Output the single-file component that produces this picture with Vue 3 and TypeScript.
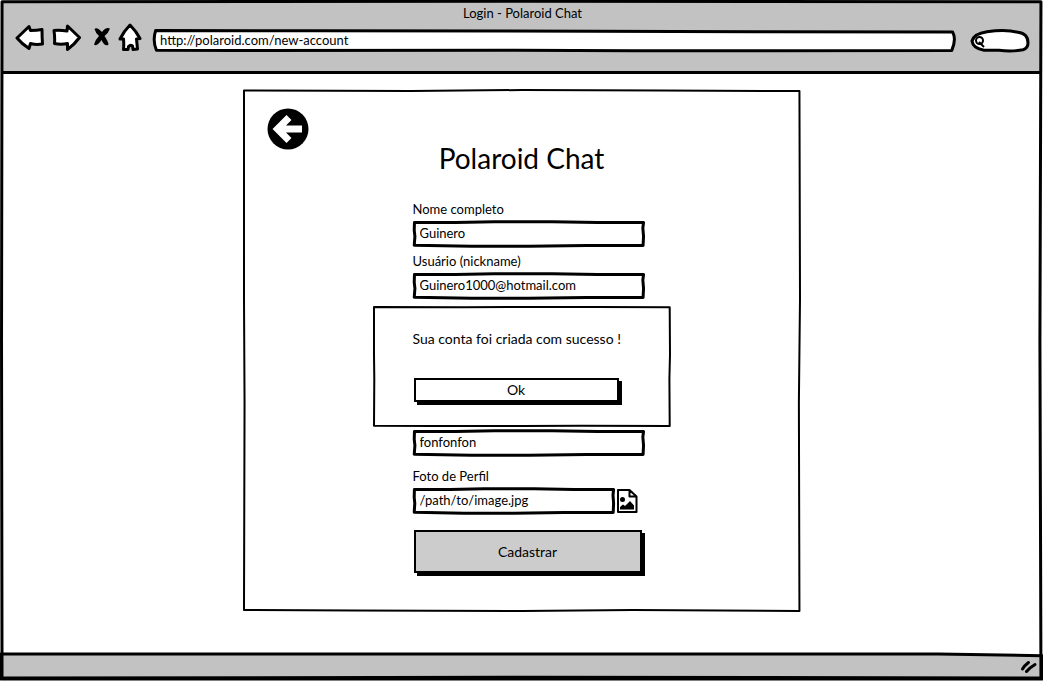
<script setup lang="ts">
import { reactive, ref } from 'vue'

const title = 'Polaroid Chat'
const address = ref('http://polaroid.com/new-account')
const query = ref('')

const account = reactive({
  name: 'Guinero',
  nickname: 'Guinero1000@hotmail.com',
  extra: 'fonfonfon',
  photo: '/path/to/image.jpg',
})

// Hand-drawn outlines on a 100 x 100 grid, stretched over their box.
const boxInk = 'M0.2 2 L18 2 L35 -1 L60 -1 L80 2 L99.8 2 L99.5 25 L99.8 60 L99.6 98 L75 98 L50 101 L25 101 L0.1 97 L0.4 60 L0.1 35 Z'
const frameInk = 'M0 0.1 L30 0.2 L50 0 L75 0.1 L99.9 0.2 L100 40 L99.8 60 L99.9 100 L70 99.8 L50 100 L20 99.9 L0 99.8 L0.1 60 L0 40 Z'
</script>

<template>
  <div class="browser">
    <header class="chrome">
      <div class="window-title">Login - {{ title }}</div>
      <nav class="toolbar">
        <button class="tool back" type="button" aria-label="Voltar">
          <svg width="30" height="28" viewBox="0 0 30 28">
            <path class="white-ink" d="M2 14 L14 2.500 L15.500 6.500 Q22 6.500 27 5.500 Q27 13 27.500 20 Q21 21 15.500 19.500 L14 24.500 Q7 20 2 14 Z" />
          </svg>
        </button>
        <button class="tool forward" type="button" aria-label="Avançar">
          <svg width="30" height="28" viewBox="0 0 30 28">
            <path class="white-ink" d="M27.500 13.500 L15.500 2 L15 7 Q8 6 2 6.500 Q3 13 2.500 19.500 Q9 21 15.500 19.500 L15.500 25.500 Q22 21 27.500 13.500 Z" />
          </svg>
        </button>
        <button class="tool stop" type="button" aria-label="Parar">
          <svg width="18" height="22" viewBox="0 0 18 22">
            <path d="M1.500 2 Q4 -0.500 9 5 Q13 -0.500 17 1.500 Q15.500 6 11.500 9 Q15 14 15.500 17.500 Q12 20.500 8.500 13 Q4 20 1 17.500 Q2 13 6 9 Q2.500 6 1.500 2 Z" />
          </svg>
        </button>
        <button class="tool home" type="button" aria-label="Início">
          <svg width="24" height="30" viewBox="0 0 24 30">
            <path class="white-ink" d="M12 2 Q18 8 22 15.500 L18.500 16 Q19 21 19.500 26 L15 26.500 L14.500 23 Q12.500 21.500 10.500 23.500 L10 26.500 L5.500 26.500 Q6 21 5.500 16 L2 16 Q6 8 12 2 Z" />
          </svg>
        </button>
        <label class="address">
          <svg class="ink" viewBox="0 0 100 100" preserveAspectRatio="none" aria-hidden="true">
            <path d="M0.200 -2 L20 -1 L55 1 L75 4 L99.700 5 Q100.200 40 99.600 97 L60 99 L45 96 L10 97 L0.300 96 Q-0.200 50 0.200 -2 Z" />
          </svg>
          <input v-model="address" type="text" aria-label="Endereço" />
        </label>
        <label class="search">
          <svg class="ink" viewBox="0 0 58 24" preserveAspectRatio="none" aria-hidden="true">
            <path d="M1 12 Q3 4 16 2 Q34 -1 47 2.500 Q57 4 57 14 Q57 20 52 21.500 Q40 24 28 22 L13 22 Q2 20 1 12 Z" />
          </svg>
          <svg class="lens" width="12" height="14" viewBox="0 0 12 14" aria-hidden="true">
            <circle cx="5.500" cy="5.500" r="3.500" /><path d="M5 7 L10 12" />
          </svg>
          <input v-model="query" type="text" aria-label="Buscar" />
        </label>
      </nav>
    </header>

    <main class="page">
      <section class="card">
        <svg class="ink" viewBox="0 0 100 100" preserveAspectRatio="none" aria-hidden="true"><path :d="frameInk" /></svg>
        <button class="return" type="button" aria-label="Voltar para o login">
          <svg width="42" height="42" viewBox="0 0 42 42">
            <circle cx="21" cy="21" r="20.500" />
            <path class="arrow" d="M22 9.500 L10.500 21 L22 32.500 M12 21 H35" />
          </svg>
        </button>
        <h1>{{ title }}</h1>

        <form class="form" @submit.prevent>
          <div class="row">
            <label for="name">Nome completo</label>
            <div class="field">
              <svg class="ink" viewBox="0 0 100 100" preserveAspectRatio="none" aria-hidden="true"><path :d="boxInk" /></svg>
              <input id="name" v-model="account.name" type="text" />
            </div>
          </div>
          <div class="row">
            <label for="nickname">Usuário (nickname)</label>
            <div class="field">
              <svg class="ink" viewBox="0 0 100 100" preserveAspectRatio="none" aria-hidden="true"><path :d="boxInk" /></svg>
              <input id="nickname" v-model="account.nickname" type="text" />
            </div>
          </div>

          <div class="dialog" role="alertdialog" aria-labelledby="message">
            <svg class="ink" viewBox="0 0 100 100" preserveAspectRatio="none" aria-hidden="true"><path :d="frameInk" /></svg>
            <p id="message">Sua conta foi criada com sucesso !</p>
            <button class="sketch-button ok" type="button">Ok</button>
          </div>

          <div class="row">
            <div class="field">
              <svg class="ink" viewBox="0 0 100 100" preserveAspectRatio="none" aria-hidden="true"><path :d="boxInk" /></svg>
              <input v-model="account.extra" type="text" aria-label="Conta" />
            </div>
          </div>
          <div class="row photo">
            <label for="photo">Foto de Perfil</label>
            <div class="picker">
              <div class="field">
                <svg class="ink" viewBox="0 0 100 100" preserveAspectRatio="none" aria-hidden="true"><path :d="boxInk" /></svg>
                <input id="photo" v-model="account.photo" type="text" />
              </div>
              <button class="browse" type="button" aria-label="Escolher imagem">
                <svg width="22" height="26" viewBox="0 0 22 26">
                  <path class="sheet" d="M2 2 H13.500 L20.500 8.500 V24 H2 Z M13.500 2 V8.500 H20.500" />
                  <circle cx="6.500" cy="11.500" r="2.500" />
                  <path d="M4 21.500 V19 L7 16.500 L9 18 L14 13 L18 17.500 V21.500 Z" />
                </svg>
              </button>
            </div>
          </div>
          <button class="sketch-button submit" type="submit">Cadastrar</button>
        </form>
      </section>
    </main>

    <footer class="status">
      <svg class="ink status-ink" viewBox="0 0 100 28" preserveAspectRatio="none" aria-hidden="true">
        <path d="M0 1 L50 1 L90 1 L100 3 V28 H0 Z" />
      </svg>
      <svg class="grip" width="18" height="16" viewBox="0 0 18 16" aria-hidden="true">
        <path d="M2.500 11 Q4.500 7.500 8.500 4.500 M6.500 13.500 Q10 9.500 15 6.500" />
      </svg>
    </footer>
    <svg class="ink window-ink" viewBox="0 0 100 100" preserveAspectRatio="none" aria-hidden="true">
      <path d="M0.100 0.100 L50 0.050 L99.900 0.100 L99.800 50 L99.900 99.700 L50 99.600 L0.100 99.700 L0.050 50 Z" />
    </svg>
  </div>
</template>

<style>
body {
  margin: 0;
  background: #fff;
}
</style>

<style scoped>
* {
  box-sizing: border-box;
}

.browser {
  position: relative;
  display: flex;
  flex-direction: column;
  min-height: 100vh;
  padding: 2px;
  font: 13px/16px Lato, "Open Sans", sans-serif;
  color: #000;
}

button,
input {
  font: inherit;
  color: inherit;
  margin: 0;
  padding: 0;
  border: 0;
  background: none;
}

input {
  position: relative;
  display: block;
  width: 100%;
  height: 22px;
  outline: 0;
}

svg {
  display: block;
}

.ink {
  position: absolute;
  inset: 1px;
  width: calc(100% - 2px);
  height: calc(100% - 2px);
  overflow: visible;
  pointer-events: none;
}

.ink path {
  fill: #fff;
  stroke: #000;
  stroke-width: 3px;
  stroke-linejoin: round;
  vector-effect: non-scaling-stroke;
}

.window-ink path {
  fill: none;
}

.chrome {
  height: 72px;
  padding: 3px 11px 0 13px;
  background: #c2c2c2;
  border-bottom: 3px solid #000;
}

.window-title {
  text-align: center;
}

.toolbar {
  display: flex;
  align-items: center;
  height: 33px;
}

.white-ink {
  fill: #fff;
  stroke: #000;
  stroke-width: 3px;
  stroke-linejoin: round;
}

.forward {
  margin-left: 7px;
}

.stop {
  margin-left: 11px;
}

.home {
  margin-left: 7px;
}

.address {
  position: relative;
  flex: 1;
  height: 22px;
  margin: 7px 0 0 11px;
  padding-left: 7px;
}

.address input {
  height: 20px;
}

.search {
  position: relative;
  width: 60px;
  height: 24px;
  margin: 7px 0 0 14px;
  padding: 0 8px 0 18px;
}

.lens {
  position: absolute;
  left: 4px;
  top: 6px;
  fill: none;
  stroke: #000;
  stroke-width: 2px;
}

.page {
  flex: 1;
  display: flex;
  justify-content: center;
  align-items: flex-start;
  padding: 15px;
}

.card {
  position: relative;
  width: 558px;
  max-width: 100%;
  padding: 19px 24px 37px;
}

.return {
  position: relative;
  display: block;
}

.return .arrow {
  fill: none;
  stroke: #fff;
  stroke-width: 7px;
}

.card > .ink path,
.dialog > .ink path {
  stroke-width: 2px;
}

h1 {
  position: relative;
  margin: -9px 0 26px;
  font-size: 28px;
  line-height: 34px;
  font-weight: 400;
  text-align: center;
}

.form {
  position: relative;
  width: 298px;
  max-width: 100%;
  margin: 0 auto;
}

.row {
  display: flex;
  flex-direction: column;
  gap: 4px;
  margin: 0 26px 6px 40px;
}

.field {
  position: relative;
  height: 26px;
  padding: 1px 7px;
}

.dialog {
  position: relative;
  height: 121px;
  margin: 7px 0 3px;
  padding: 25px 50px 0 40px;
  font-size: 14px;
}

.dialog p {
  position: relative;
  margin: 0 0 31px;
  white-space: nowrap;
}

.sketch-button {
  position: relative;
  display: block;
  border: 2px solid #000;
  box-shadow: 3px 3px 0 #000;
}

.ok {
  width: calc(100% - 3px);
  height: 24px;
  margin-left: 1px;
  background: #fff;
}

.photo {
  margin: 12px 26px 16px 40px;
}

.picker {
  display: flex;
  align-items: center;
  gap: 1px;
  margin-right: 7px;
}

.picker .field {
  flex: 1;
}

.submit {
  width: calc(100% - 70px);
  height: 43px;
  margin: 0 0 2px 41px;
  font-size: 14px;
  background: #ccc;
}

.sheet {
  fill: #fff;
  stroke: #000;
  stroke-width: 2px;
  stroke-linejoin: round;
}

.status {
  position: relative;
  display: flex;
  justify-content: flex-end;
  align-items: center;
  height: 26px;
  padding-right: 3px;
}

.status-ink {
  inset: 0 -1px;
  width: calc(100% + 2px);
  height: 100%;
}

.status-ink path {
  fill: #c2c2c2;
}

.grip {
  position: relative;
  fill: none;
  stroke: #000;
  stroke-width: 3px;
  stroke-linecap: round;
}
</style>
